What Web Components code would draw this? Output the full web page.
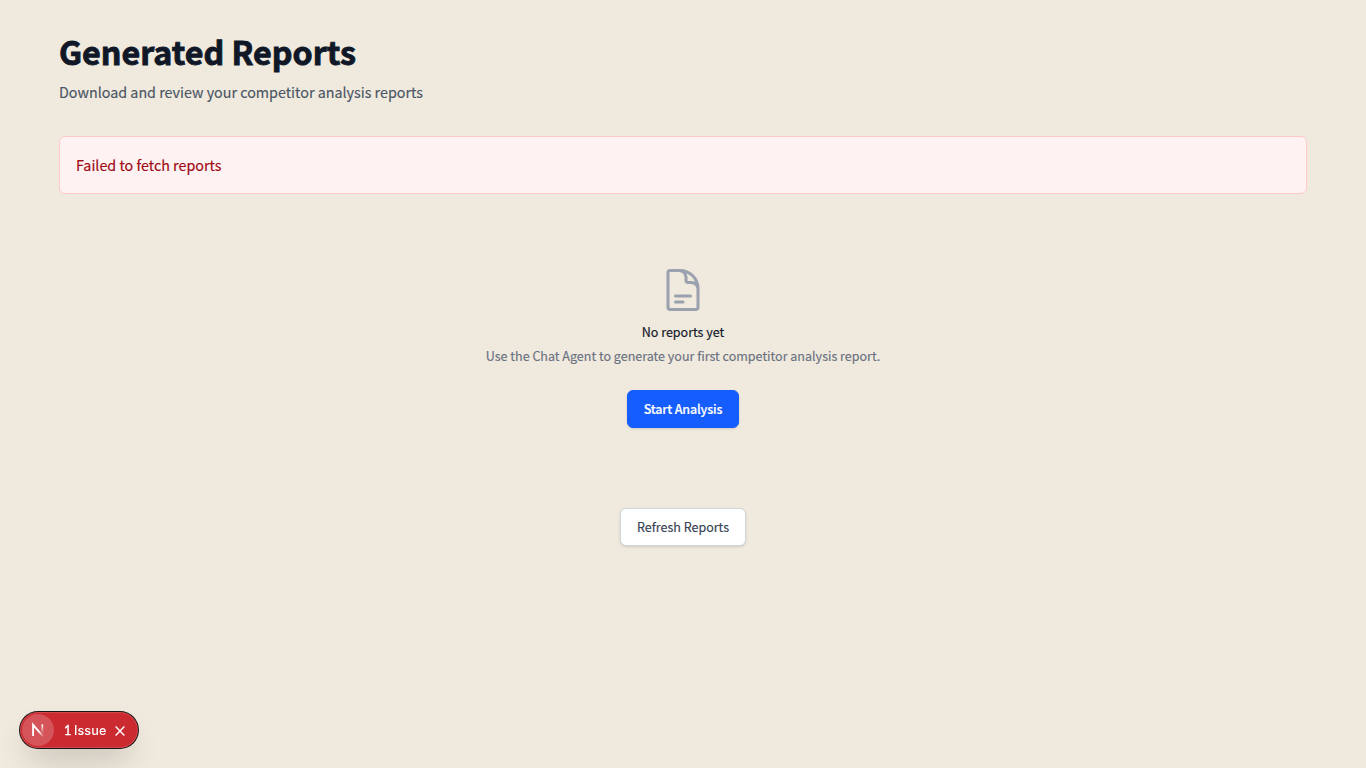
<!DOCTYPE html>
<html lang="en">
<head>
<meta charset="utf-8">
<title>Generated Reports</title>
<style>
html,body{margin:0;height:100%}
body{background:#f0e9dd;font:400 14.32px/24px "Noto Sans CJK SC","Noto Sans",sans-serif;color:#101828;overflow:hidden}
reports-page{-webkit-text-stroke:.15px}
</style>
</head>
<body>
<reports-page></reports-page>
<dev-indicator>Issue</dev-indicator>
<script>
const define = (name, html) => {
  const t = document.createElement('template');
  t.innerHTML = html;
  customElements.define(name, class extends HTMLElement {
    constructor() {
      super();
      this.attachShadow({mode: 'open'}).append(t.content.cloneNode(true));
    }
  });
};

define('page-header', `
<style>
:host{display:block;margin-bottom:32px}
h1{margin:-1px 0 0;font-size:32.24px;line-height:40px;font-weight:700;-webkit-text-stroke:.9px;color:#101828}
p{margin:9px 0 0;color:#4a5565}
</style>
<h1><slot name="title"></slot></h1>
<p><slot></slot></p>`);

define('error-alert', `
<style>
:host{display:block;box-sizing:border-box;padding:16px;border:1px solid #ffc9c9;border-radius:6px;background:#fef2f2;color:#9f0712;margin-bottom:24px}
</style>
<slot></slot>`);

define('action-button', `
<style>
:host{display:inline-flex}
button{font:400 12.53px/20px "Noto Sans CJK SC","Noto Sans",sans-serif;margin:0;padding:8px 0;width:126px;border-radius:6px;border:1px solid #d1d5dc;background:#fff;color:#364153;box-shadow:0 1px 3px rgba(0,0,0,.1),0 1px 2px -1px rgba(0,0,0,.1)}
:host([primary]) button{background:#155dfc;color:#fff;border-color:#155dfc;width:112px;font-weight:500;letter-spacing:-.18px}
</style>
<button type="button"><slot></slot></button>`);

define('empty-state', `
<style>
:host{display:flex;flex-direction:column;align-items:center;padding:48px 0;font-size:12.53px;line-height:20px}
svg{width:48px;height:48px;color:#99a1af}
h3{margin:8px 0 0;font-size:inherit;font-weight:400;color:#101828}
p{margin:4px 0 24px;color:#6a7282}
</style>
<svg viewBox="0 0 24 24" fill="none" stroke="currentColor" stroke-width="1.5" stroke-linecap="round" stroke-linejoin="round"><path d="M19.5 14.25v-2.625a3.375 3.375 0 00-3.375-3.375h-1.5A1.125 1.125 0 0113.5 7.125v-1.5a3.375 3.375 0 00-3.375-3.375H8.25m0 12.75h7.5m-7.5 3H12M10.5 2.25H5.625c-.621 0-1.125.504-1.125 1.125v17.25c0 .621.504 1.125 1.125 1.125h12.75c.621 0 1.125-.504 1.125-1.125V11.25a9 9 0 00-9-9z"/></svg>
<h3><slot name="heading"></slot></h3>
<p><slot></slot></p>
<slot name="action"></slot>`);

define('reports-page', `
<style>
:host{display:block;box-sizing:border-box;max-width:1280px;margin:0 auto;padding:32px 16px}
.refresh{display:flex;justify-content:center;margin-top:32px}
</style>
<page-header><span slot="title">Generated Reports</span>Download and review your competitor analysis reports</page-header>
<error-alert>Failed to fetch reports</error-alert>
<empty-state><span slot="heading">No reports yet</span>Use the Chat Agent to generate your first competitor analysis report.<action-button slot="action" primary>Start Analysis</action-button></empty-state>
<div class="refresh"><action-button>Refresh Reports</action-button></div>`);

define('dev-indicator', `
<style>
:host{position:fixed;left:20px;bottom:20px;display:flex;align-items:center;box-sizing:border-box;width:118px;height:36px;padding:2px;border-radius:18px;background:#ca2a30;color:#fff;font:500 12.6px/16px Inter,sans-serif;letter-spacing:.1px;box-shadow:0 0 0 1px #171717,inset 0 0 0 1px rgba(255,255,255,.14),0 16px 32px -8px rgba(0,0,0,.24)}
.mark{width:32px;height:32px;border-radius:50%;background:rgba(255,255,255,.2);flex:none}
.mark svg{display:block}
.label{margin-left:10px;padding-top:1px;white-space:pre;width:42px}
.count{font-family:Lato,sans-serif;font-weight:400;-webkit-text-stroke:.3px;letter-spacing:-.3px}
.close{margin:1px 0 0 8px;flex:none}
</style>
<span class="mark"><svg width="32" height="32" viewBox="0 0 32 32" fill="none">
<defs><linearGradient id="a" gradientUnits="userSpaceOnUse" x1="17" y1="17" x2="21.8" y2="23"><stop stop-color="#fff"/><stop offset="1" stop-color="#fff" stop-opacity="0"/></linearGradient>
<linearGradient id="b" gradientUnits="userSpaceOnUse" x1="20" y1="10" x2="20" y2="19.5"><stop stop-color="#fff"/><stop offset="1" stop-color="#fff" stop-opacity="0"/></linearGradient></defs>
<path d="M21.3 22.6 11.1 10.8V21.9" stroke="url(#a)" stroke-width="1.9"/><path d="M20.3 10.3v10.3" stroke="url(#b)" stroke-width="1.8"/></svg></span>
<span class="label"><span class="count">1 </span><slot></slot></span>
<svg class="close" width="12" height="12" viewBox="0 0 12 12" fill="none" stroke="#fff" stroke-width="1.4"><path d="M1.6 1.6 10.4 10.4M10.4 1.6 1.6 10.4"/></svg>`);
</script>
</body>
</html>
